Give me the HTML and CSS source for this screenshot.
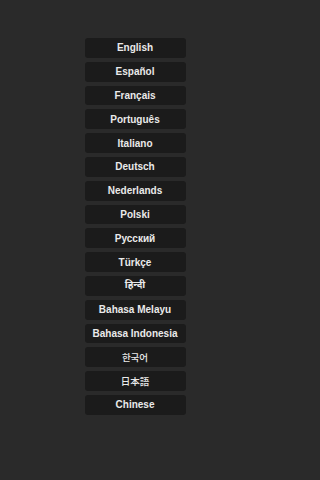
FILE: index.html
```html
<!DOCTYPE html>
<html lang="en">
<head>
<meta charset="utf-8">
<title>Language</title>
<link rel="stylesheet" href="styles.css">
</head>
<body>
<main class="list">
  <div class="btn">English</div>
  <div class="btn">Español</div>
  <div class="btn">Français</div>
  <div class="btn">Português</div>
  <div class="btn">Italiano</div>
  <div class="btn">Deutsch</div>
  <div class="btn">Nederlands</div>
  <div class="btn">Polski</div>
  <div class="btn">Русский</div>
  <div class="btn">Türkçe</div>
  <div class="btn hi" lang="hi">हिन्दी</div>
  <div class="btn">Bahasa Melayu</div>
  <div class="btn">Bahasa Indonesia</div>
  <div class="btn ko" lang="ko">한국어</div>
  <div class="btn ja" lang="ja">日本語</div>
  <div class="btn">Chinese</div>
</main>
</body>
</html>
```
FILE: styles.css
```css
html, body {
  margin: 0;
  padding: 0;
  background: #2a2a2a;
  width: 270px;
  height: 480px;
  overflow: hidden;
}
.list {
  display: flex;
  flex-direction: column;
  align-items: center;
  gap: 4px;
  padding-top: 38px;
}
.btn {
  box-sizing: border-box;
  width: 101px;
  height: 19.8px;
  padding-top: 1px;
  background: #1b1b1b;
  border-radius: 3px;
  display: flex;
  align-items: center;
  justify-content: center;
  color: #eaeaea;
  font-family: "Liberation Sans", Arial, "Noto Sans", sans-serif;
  font-weight: bold;
  font-size: 10px;
  line-height: 1;
  white-space: nowrap;
}
.hi {
  font-family: "Noto Sans Devanagari", "Lohit Devanagari", "FreeSans", "Mangal", "Noto Sans", sans-serif;
}
.ko {
  font-family: "Noto Sans CJK KR", sans-serif;
  font-size: 9.5px;
  font-weight: 500;
}
.ja {
  font-family: "Noto Sans CJK JP", sans-serif;
  font-size: 9.5px;
  font-weight: 500;
}
```
